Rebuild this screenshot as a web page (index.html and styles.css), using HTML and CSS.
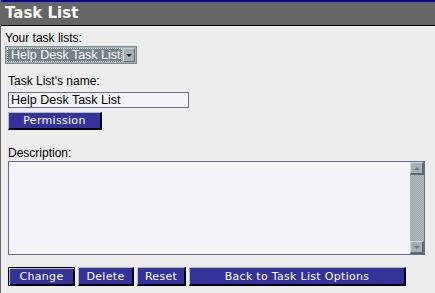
FILE: index.html
```html
<!DOCTYPE html>
<html>
<head>
<meta charset="utf-8">
<link rel="stylesheet" href="styles.css">
</head>
<body>
<div class="topbar"></div>
<div class="header">Task List</div>
<div class="content">
  <div class="label">Your task lists:</div>
  <div class="select">
    <span class="select-value"><span class="select-focus">Help Desk Task List</span></span>
    <span class="select-btn"><span class="arrow-down"></span></span>
  </div>
  <div class="section">
    <div class="label label-name">Task List's name:</div>
    <input class="text-input" type="text" value="Help Desk Task List">
    <div class="perm-row"><button class="btn btn-perm">Permission</button></div>
    <div class="label label-desc">Description:</div>
    <div class="textarea-box">
      <textarea class="textarea"></textarea>
      <div class="scrollbar">
        <div class="sb-btn"><span class="sb-arrow-up"></span></div>
        <div class="sb-track"></div>
        <div class="sb-btn"><span class="sb-arrow-down"></span></div>
      </div>
    </div>
    <div class="actions">
      <button class="btn btn-change">Change</button>
      <button class="btn btn-delete">Delete</button>
      <button class="btn btn-reset">Reset</button>
      <button class="btn btn-back">Back to Task List Options</button>
    </div>
  </div>
</div>
</body>
</html>
```
FILE: styles.css
```css
html, body {
  margin: 0;
  padding: 0;
}
body {
  background: #ededed;
  border-left: 1px solid #666666;
  min-height: 100vh;
  box-sizing: border-box;
  font-family: "Liberation Sans", Arial, sans-serif;
  overflow: hidden;
}
.topbar {
  height: 2px;
  background: #0a0a7c;
}
.header {
  height: 23px;
  line-height: 23px;
  background: #666666;
  border-bottom: 1px solid #000;
  color: #fff;
  font-family: "DejaVu Sans", Verdana, sans-serif;
  font-weight: bold;
  font-size: 15px;
  padding-left: 4px;
}
.content {
  padding-left: 4px;
  padding-top: 5px;
}
.label {
  font-size: 12px;
  line-height: 14px;
  color: #000;
}
.select {
  margin-top: 1px;
  display: flex;
  width: 132px;
  height: 18px;
  box-sizing: border-box;
  border: 1px solid #7a8a90;
  background: #a9b5b9;
  padding: 1px;
}
.select-value {
  flex: 1;
  background: #ffffff;
  display: flex;
  padding: 0;
}
.select-focus {
  flex: 1;
  background: #71828a;
  color: #fff;
  font-size: 12.5px;
  line-height: 12px;
  border: 1px dotted #ffffff;
  padding-left: 3px;
  white-space: nowrap;
  overflow: hidden;
}
.select-btn {
  width: 12px;
  margin-left: 1px;
  background: #a3b0b4;
  border-top: 1px solid #c8d0d3;
  border-left: 1px solid #c8d0d3;
  border-right: 1px solid #5d6b70;
  border-bottom: 1px solid #5d6b70;
  box-sizing: border-box;
  display: flex;
  align-items: center;
  justify-content: center;
}
.arrow-down {
  width: 0;
  height: 0;
  border-left: 3px solid transparent;
  border-right: 3px solid transparent;
  border-top: 3px solid #222;
}
.section {
  padding-left: 3px;
}
.label-name {
  margin-top: 10px;
}
.text-input {
  display: block;
  margin: 4px 0 0 0;
  width: 181px;
  height: 16px;
  box-sizing: border-box;
  border: 1px solid #6c6a8e;
  background: #f3f3f8;
  font-family: "Liberation Sans", Arial, sans-serif;
  font-size: 12.5px;
  padding: 0 0 0 2px;
  color: #000;
  outline: none;
}
.perm-row {
  margin-top: 4px;
  display: flex;
}
.btn {
  height: 19px;
  box-sizing: border-box;
  background: #333399;
  color: #fff;
  font-family: "DejaVu Sans", Verdana, sans-serif;
  font-size: 11px;
  line-height: 15px;
  padding: 0;
  border-top: 1px solid #b8b8d8;
  border-left: 1px solid #b8b8d8;
  border-right: 2px solid #000;
  border-bottom: 2px solid #000;
  cursor: pointer;
  letter-spacing: 0.3px;
}
.btn-perm {
  width: 94px;
  height: 18px;
}
.label-desc {
  margin-top: 16px;
}
.textarea-box {
  margin-top: 1px;
  width: 417px;
  height: 94px;
  box-sizing: border-box;
  border: 1px solid #6c6a8e;
  background: #f3f3f8;
  display: flex;
}
.textarea {
  flex: 1;
  border: none;
  background: transparent;
  resize: none;
  outline: none;
  margin: 0;
  padding: 0;
}
.scrollbar {
  width: 14px;
  display: flex;
  flex-direction: column;
  background-color: #a6b2b6;
  background-image: repeating-conic-gradient(#9aa7ab 0 25%, #b1bcc0 0 50%);
  background-size: 2px 2px;
}
.sb-btn {
  height: 13px;
  box-sizing: border-box;
  background: #a3b0b4;
  border-top: 1px solid #d0d7da;
  border-left: 1px solid #d0d7da;
  border-right: 2px solid #5d6b70;
  border-bottom: 2px solid #5d6b70;
  display: flex;
  align-items: center;
  justify-content: center;
}
.sb-track {
  flex: 1;
}
.sb-arrow-up {
  width: 0;
  height: 0;
  border-left: 3px solid transparent;
  border-right: 3px solid transparent;
  border-bottom: 3px solid #6a777c;
}
.sb-arrow-down {
  width: 0;
  height: 0;
  border-left: 3px solid transparent;
  border-right: 3px solid transparent;
  border-top: 3px solid #6a777c;
}
.actions {
  margin-top: 12px;
  display: flex;
  gap: 3px;
}
.btn-change {
  width: 67px;
  border: 1px solid #000;
  box-shadow: inset 1px 1px 0 #b8b8d8, inset -1px -1px 0 #000;
}
.btn-delete {
  width: 56px;
}
.btn-reset {
  width: 49px;
}
.btn-back {
  width: 217px;
}
```
